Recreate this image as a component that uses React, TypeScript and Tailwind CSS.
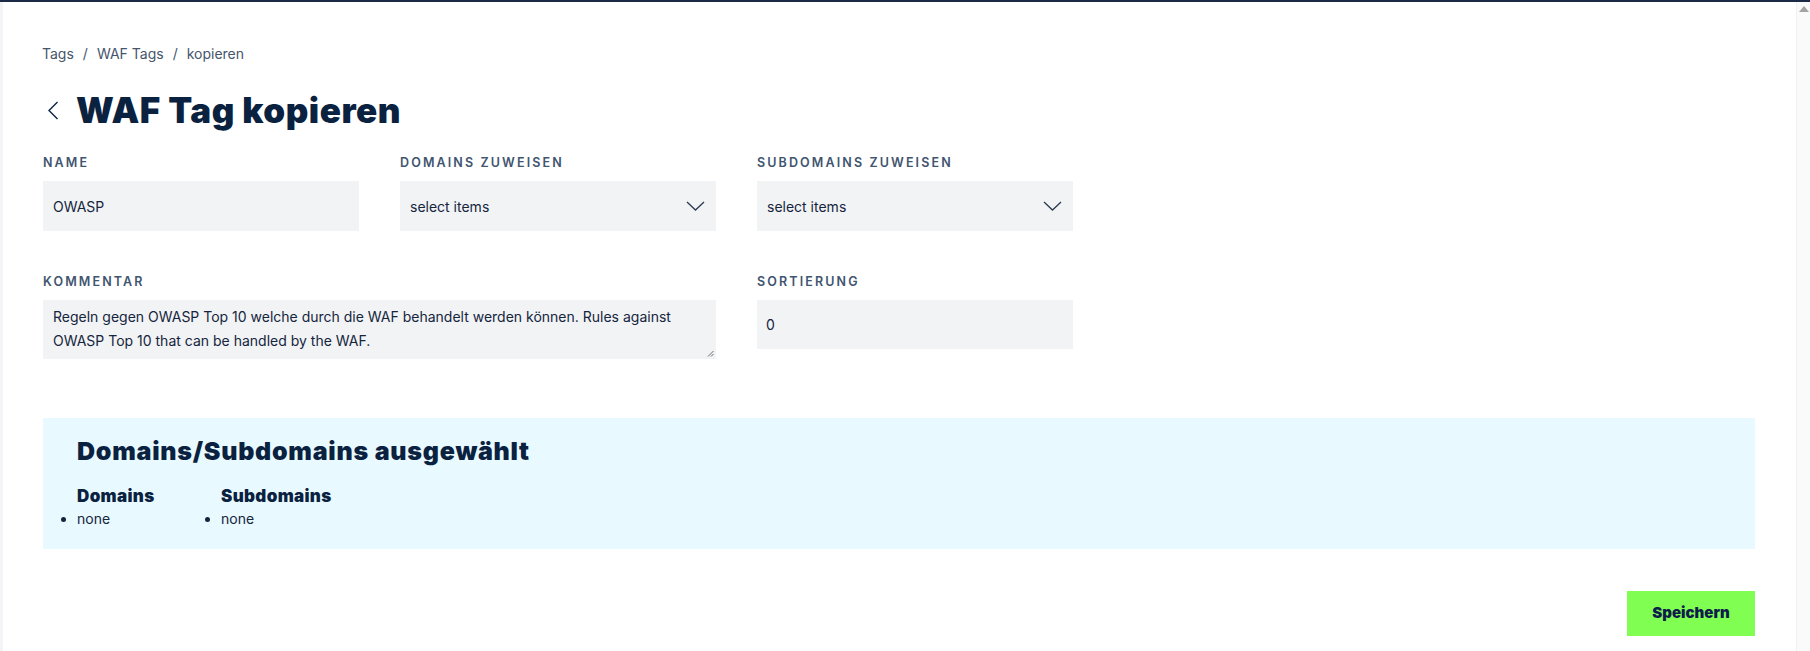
import React from "react";

const heading = "font-['Inter',sans-serif] font-black text-[#0a2240]";
const body = "font-['Inter',sans-serif]";
const label =
  "block font-['Inter',sans-serif] text-[12.5px] leading-4 font-semibold uppercase tracking-[0.17em] text-[#3f5570] mb-[10px]";
const field = "bg-[#f2f3f5] text-[14px] text-[#14253d] " + body;

function Chevron() {
  return (
    <svg className="w-[19px] h-[10px]" viewBox="0 0 19 10" fill="none" stroke="#2c3b52" strokeWidth={1.3}>
      <path d="M1 1l8.5 8 8.5-8" />
    </svg>
  );
}

function SelectBox({ text }: { text: string }) {
  return (
    <div className={`${field} h-[50px] flex items-center justify-between pl-[10px] pr-[11px]`}>
      <span>{text}</span>
      <Chevron />
    </div>
  );
}

export default function App() {
  return (
    <div className="h-[651px] bg-white flex flex-col overflow-hidden">
      <div className="h-[2px] bg-[#1c2a47]" />
      <div className="flex flex-1">
        <main className="flex-1 border-l-[3px] border-[#f3f4f6] pl-[40px] pr-[41px] pt-[42px]">
          {/* breadcrumb */}
          <nav className={`${body} text-[14px] leading-5 text-[#46556b] flex items-center -ml-px`}>
            <span>Tags</span>
            <span className="mx-[9px]">/</span>
            <span>WAF Tags</span>
            <span className="mx-[9px]">/</span>
            <span>kopieren</span>
          </nav>

          <div className="flex items-center mt-[26px] h-[40px]">
            <svg className="w-[12px] h-[19px] ml-[4px] mr-[17px]" viewBox="0 0 12 19" fill="none" stroke="#0b2340" strokeWidth={1.4}>
              <path d="M10.5 1L2 9.5l8.5 8.5" />
            </svg>
            <h1 className={`${heading} text-[35px] leading-10 tracking-[0.015em]`}>WAF Tag kopieren</h1>
          </div>

          <div className="grid grid-cols-[316px_316px_316px] gap-x-[41px] gap-y-[43px] mt-[25px]">
            <div>
              <label className={label}>Name</label>
              <div className={`${field} h-[50px] flex items-center px-[10px]`}>OWASP</div>
            </div>
            <div>
              <label className={label}>Domains zuweisen</label>
              <SelectBox text="select items" />
            </div>
            <div>
              <label className={label}>Subdomains zuweisen</label>
              <SelectBox text="select items" />
            </div>

            <div className="col-span-2">
              <label className={label}>Kommentar</label>
              <div className={`${field} relative h-[59px] px-[10px] pt-[5px] leading-[24px]`}>
                Regeln gegen OWASP Top 10 welche durch die WAF behandelt werden können. Rules against
                <br />
                OWASP Top 10 that can be handled by the WAF.
                <svg className="absolute right-[2px] bottom-[2px] w-[7px] h-[7px]" viewBox="0 0 7 7" stroke="#6b6b6b" strokeWidth={1}>
                  <path d="M6.5 1L1 6.5M6.5 4L4 6.5" />
                </svg>
              </div>
            </div>
            <div>
              <label className={label}>Sortierung</label>
              <div className={`${field} h-[49px] flex items-center px-[9px]`}>0</div>
            </div>
          </div>

          <section className="mt-[59px] bg-[#e8f9ff] h-[131px] pl-[34px] pt-[17px]">
            <h2 className={`${heading} text-[25px] leading-8 tracking-[0.03em]`}>Domains/Subdomains ausgewählt</h2>
            <div className="flex mt-[19px]">
              <div className="w-[144px]">
                <h3 className={`${heading} text-[17px] leading-5 tracking-[0.02em]`}>Domains</h3>
                <ul className={`${body} list-disc text-[14px] leading-5 text-[#14253d] mt-[3px]`}>
                  <li>none</li>
                </ul>
              </div>
              <div>
                <h3 className={`${heading} text-[17px] leading-5 tracking-[0.02em]`}>Subdomains</h3>
                <ul className={`${body} list-disc text-[14px] leading-5 text-[#14253d] mt-[3px]`}>
                  <li>none</li>
                </ul>
              </div>
            </div>
          </section>

          <div className="flex justify-end mt-[42px]">
            <button className={`${heading} bg-[#80ff52] w-[128px] h-[45px] text-[15px] text-[#0d1c4a]`}>
              Speichern
            </button>
          </div>
        </main>

        {/* scrollbar */}
        <div className="w-[14px] bg-[#fafafa] border-l border-[#f0f0f0] flex justify-center pt-[4px]">
          <div className="w-0 h-0 border-l-[5px] border-r-[5px] border-b-[6px] border-l-transparent border-r-transparent border-b-[#a3a3a3]" />
        </div>
      </div>
    </div>
  );
}
